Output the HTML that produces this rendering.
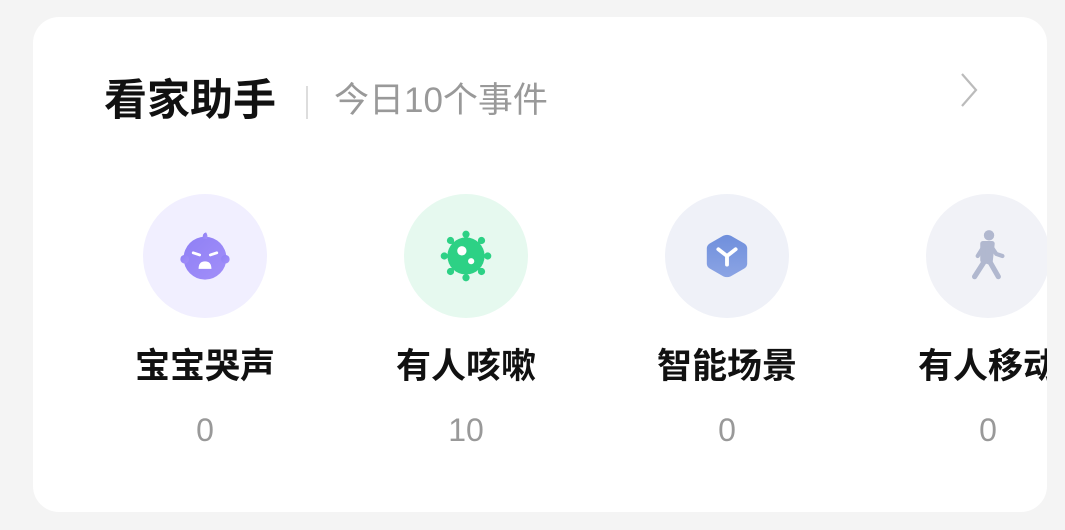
<!DOCTYPE html>
<html><head><meta charset="utf-8"><style>
*{margin:0;padding:0;box-sizing:border-box}
body{width:1065px;height:530px;background:#f4f4f4;overflow:hidden;position:relative;font-family:"Liberation Sans","Noto Sans CJK SC",sans-serif}
.card{position:absolute;left:33px;top:17px;width:1014px;height:495px;background:#fff;border-radius:26px;overflow:hidden}
.t{position:absolute;left:71px;top:59px;font-size:43px;font-weight:bold;color:#111;line-height:50px}
.div{position:absolute;left:273px;top:69px;width:2px;height:33px;background:#ddd}
.s{position:absolute;left:301px;top:62px;font-size:35px;color:#999;line-height:44px}
.chev{position:absolute;left:925px;top:55px}
.item{position:absolute;top:177px;width:200px;text-align:center}
.c{width:124px;height:124px;border-radius:50%;margin:0 auto;display:flex;align-items:center;justify-content:center}
.l{margin-top:26px;font-size:35px;font-weight:bold;color:#111;line-height:46px;white-space:nowrap}
.n{margin-top:20px;font-size:32px;color:#999;line-height:40px}
</style></head><body>
<div class="card">
<div class="t">看家助手</div>
<div class="div"></div>
<div class="s">今日10个事件</div>
<svg class="chev" width="24" height="36" viewBox="0 0 24 36"><path d="M4 2 L18 18 L4 34" fill="none" stroke="#bbb" stroke-width="2.2"/></svg>

<div class="item" style="left:72px"><div class="c" style="background:#f1efff">
<svg width="60" height="60" viewBox="0 0 56 56"><defs><linearGradient id="g1" x1="0" y1="0" x2="1" y2="1"><stop offset="0" stop-color="#8f80f5"/><stop offset="1" stop-color="#a28ff9"/></linearGradient></defs>
<circle cx="28" cy="30" r="20" fill="url(#g1)"/><circle cx="9" cy="31" r="4" fill="url(#g1)"/><circle cx="47" cy="31" r="4" fill="url(#g1)"/><path d="M26 12 Q25 7 29 6 Q31 9 30 12 Z" fill="url(#g1)"/>
<path d="M17 25 L23 27 M39 25 L33 27" stroke="#fff" stroke-width="2.6" stroke-linecap="round"/><path d="M22 40 Q22 33 28 33 Q34 33 34 40 Z" fill="#fff"/></svg></div>
<div class="l">宝宝哭声</div><div class="n">0</div></div>

<div class="item" style="left:333px"><div class="c" style="background:#e6f9ef">
<svg width="62" height="62" viewBox="0 0 60 60"><g fill="#2dd185"><circle cx="30" cy="30" r="18"/>
<circle cx="30" cy="9" r="3.5"/><circle cx="30" cy="51" r="3.5"/><circle cx="9" cy="30" r="3.5"/><circle cx="51" cy="30" r="3.5"/><circle cx="15" cy="15" r="3.5"/><circle cx="45" cy="15" r="3.5"/><circle cx="15" cy="45" r="3.5"/><circle cx="45" cy="45" r="3.5"/>
<path d="M30 9V30M9 30H51M15 15L45 45M45 15L15 45" stroke="#2dd185" stroke-width="3"/></g>
<circle cx="26" cy="25" r="4.5" fill="#fff"/><circle cx="35" cy="35" r="3" fill="#fff"/></svg></div>
<div class="l">有人咳嗽</div><div class="n">10</div></div>

<div class="item" style="left:594px"><div class="c" style="background:#eff1f8">
<svg width="50" height="50" viewBox="0 0 52 52"><defs><linearGradient id="g3" x1="0" y1="0" x2="0" y2="1"><stop offset="0" stop-color="#6f8fdc"/><stop offset="1" stop-color="#8ba4e4"/></linearGradient></defs>
<path d="M26 4 Q28 4 30 5 L44 13 Q47 15 47 18 L47 34 Q47 37 44 39 L30 47 Q26 49 22 47 L8 39 Q5 37 5 34 L5 18 Q5 15 8 13 L22 5 Q24 4 26 4Z" fill="url(#g3)"/>
<path d="M17 19 L26 26 L35 19 M26 26 V35" stroke="#fff" stroke-width="4" stroke-linecap="round" fill="none"/></svg></div>
<div class="l">智能场景</div><div class="n">0</div></div>

<div class="item" style="left:855px"><div class="c" style="background:#f1f2f7">
<svg width="52" height="62" viewBox="0 0 50 60"><g fill="#b1b8cf" stroke="#b1b8cf" stroke-linecap="round" stroke-linejoin="round">
<circle cx="26" cy="10" r="5" stroke="none"/>
<path d="M20 18 L29 18 L27 36 L20 34 Z" stroke-width="5"/>
<path d="M29 22 L33 28 L39 30" fill="none" stroke-width="4"/>
<path d="M20 22 L15 30" fill="none" stroke-width="4"/>
<path d="M27 36 L35 50" fill="none" stroke-width="5"/>
<path d="M21 36 L12 50" fill="none" stroke-width="5"/></g></svg></div>
<div class="l">有人移动</div><div class="n">0</div></div>
</div>
</body></html>
